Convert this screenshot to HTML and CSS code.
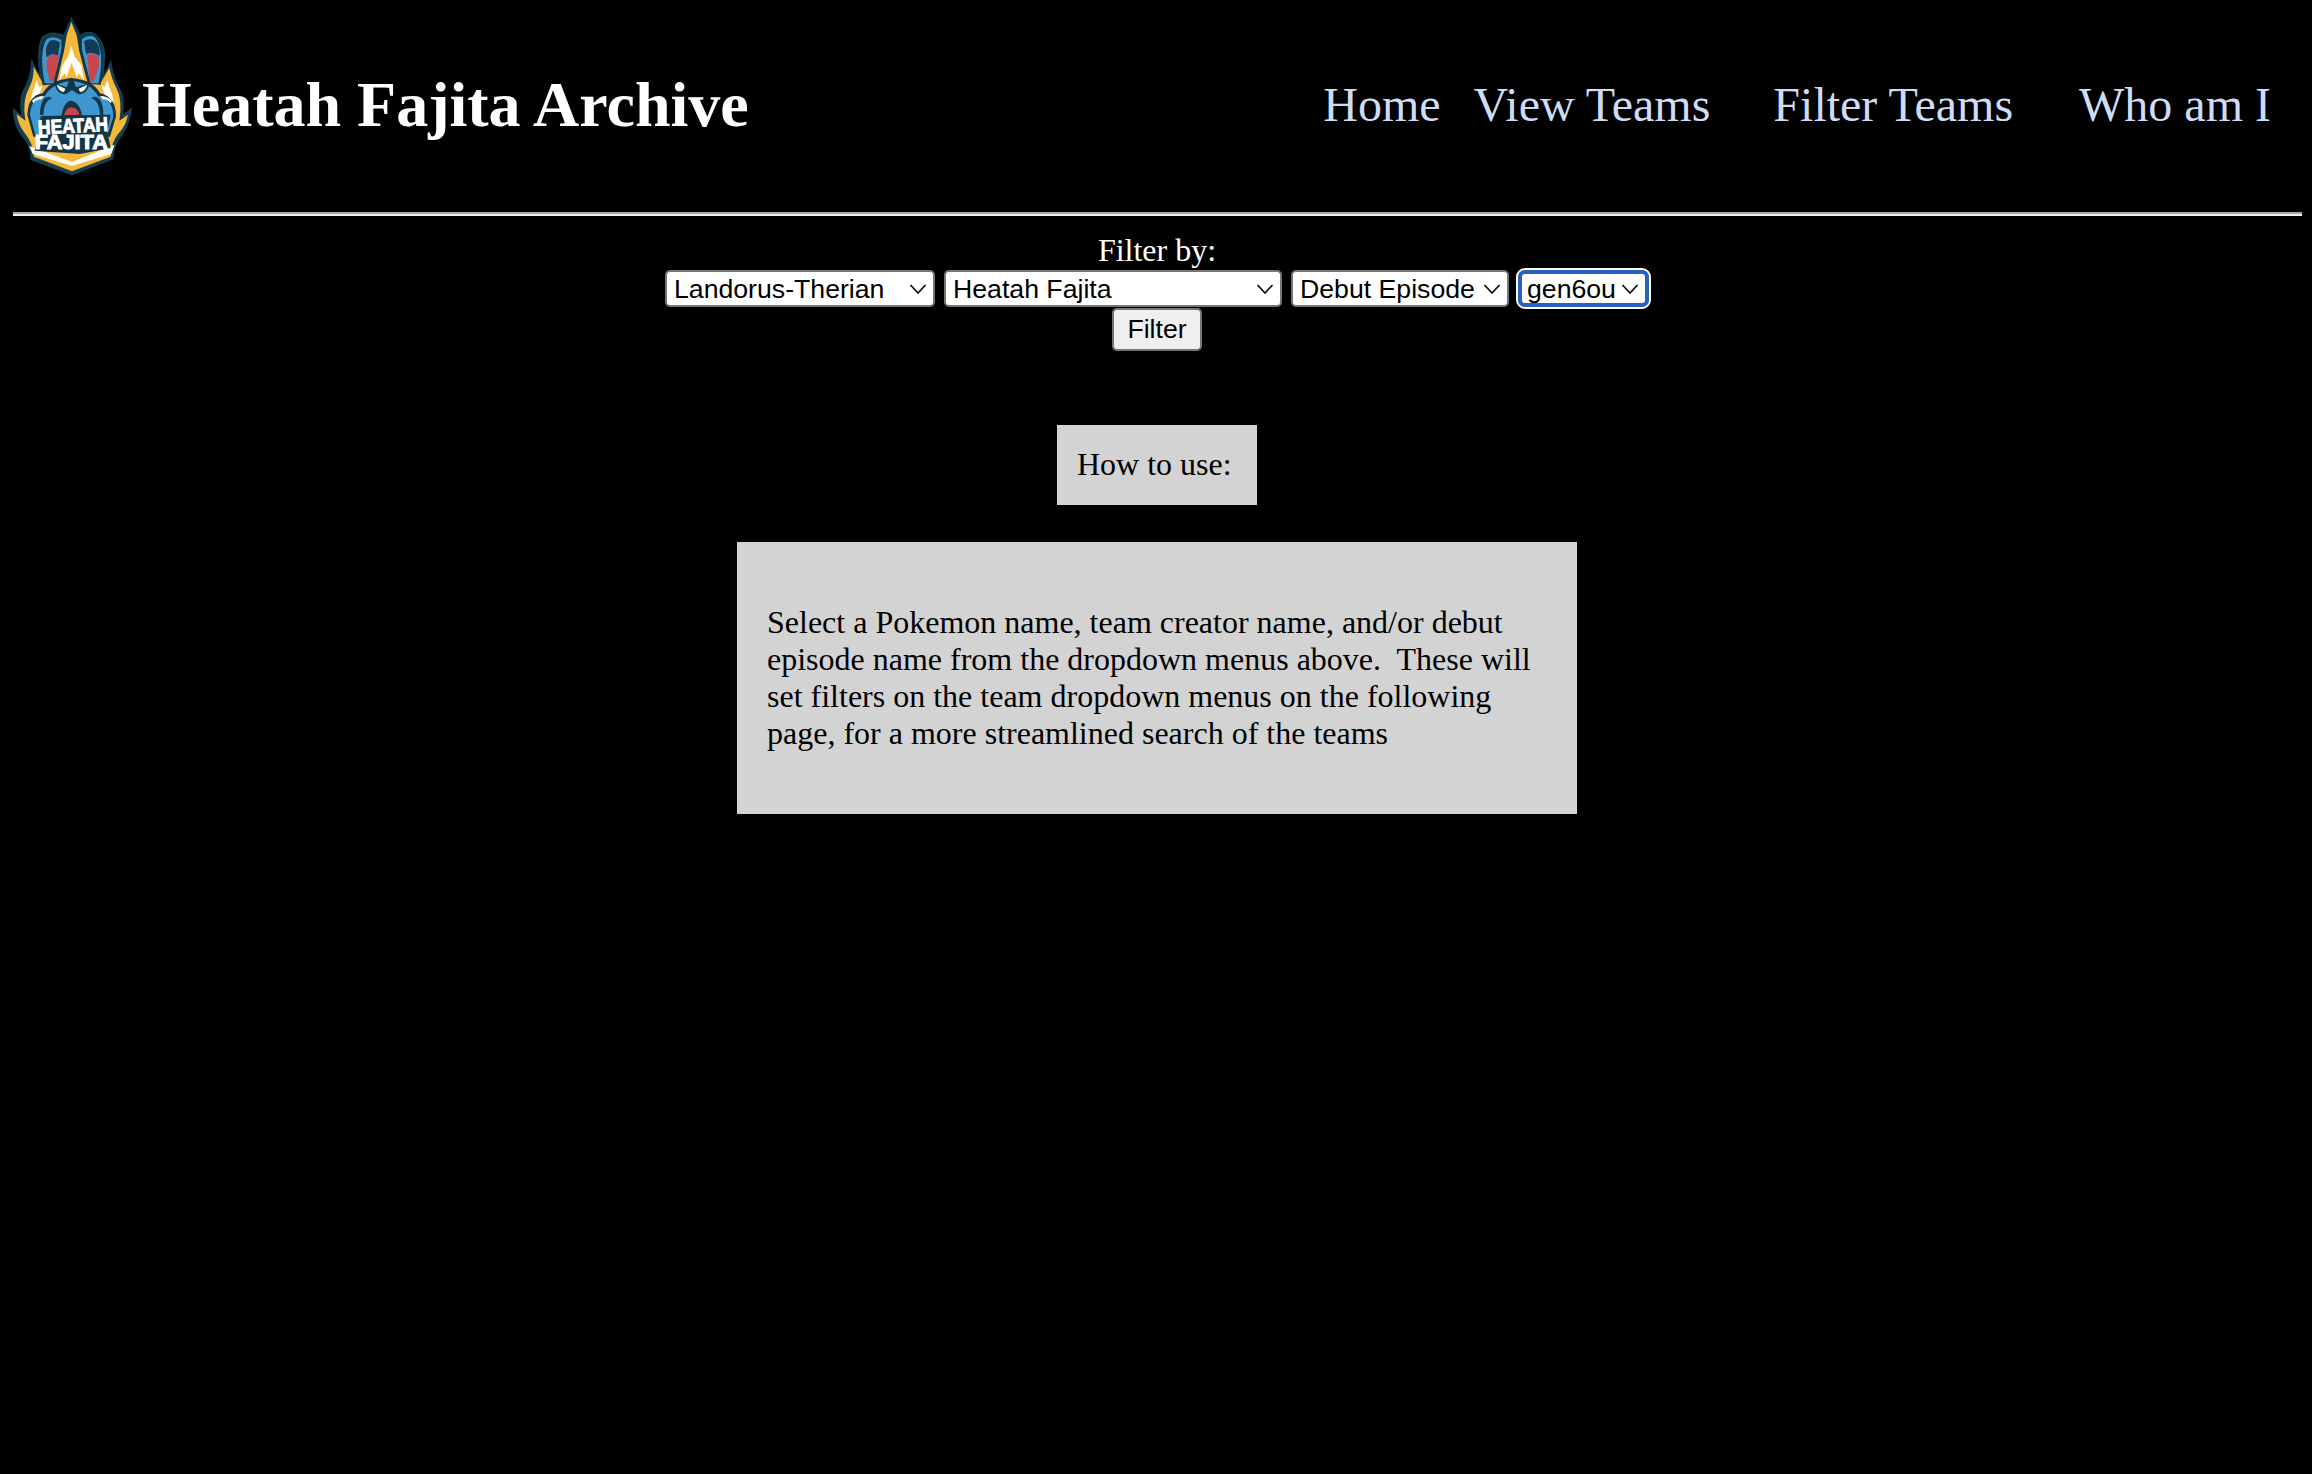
FILE: index.html
```html
<!DOCTYPE html>
<html lang="en">
<head>
<meta charset="utf-8">
<title>Heatah Fajita Archive</title>
<link rel="stylesheet" href="styles.css">
</head>
<body>
<header class="site-header">
  <div class="brand">
    <svg class="logo" viewBox="39 39 363 486" aria-label="Heatah Fajita logo">
      <path class="l-outline" d="M214 50 L236 92 L240 104 Q256 92 276 96 Q312 112 316 165 L312 222 L333 180 Q340 230 356 258 Q378 290 368 345 L396 322 Q392 370 366 408 Q344 428 340 478 L216 526 L92 480 Q90 430 62 405 Q38 370 38 322 L64 346 Q52 290 78 254 Q92 220 94 176 L118 222 Q108 150 124 112 Q150 88 190 104 Z"/>
      <path class="l-yellow" d="M101 200 Q102 235 88 262 Q66 300 76 362 L50 342 Q54 372 72 396 Q100 430 102 470 L216 514 L332 470 Q334 425 356 400 Q378 376 384 344 L358 362 Q368 300 350 266 Q336 240 328 204 L300 252 L130 252 Z"/>
      <path class="l-white" d="M110 240 L118 262 L128 256 L112 300 L94 340 Q86 300 102 266 Z M322 240 L314 262 L304 256 L320 300 L338 340 Q346 300 330 266 Z"/>
      <path class="l-white" d="M88 438 L216 486 L344 434 L334 462 L216 498 L98 462 Z"/>

      <path class="l-dark" d="M128 256 Q108 150 134 112 Q160 94 190 114 L198 250 Z"/>
      <path class="l-blue" d="M134 250 Q116 155 140 118 Q160 104 184 120 L186 250 Z"/>
      <path class="l-navy" d="M140 172 Q132 140 150 122 Q168 116 180 128 L174 168 Q156 156 140 172 Z"/>
      <path class="l-red" d="M150 242 Q132 190 144 172 Q158 158 176 168 L172 242 Z"/>

      <path class="l-dark" d="M232 250 L238 114 Q260 92 288 104 Q322 140 302 254 Z"/>
      <path class="l-blue" d="M244 250 L246 118 Q264 102 284 112 Q316 150 296 250 Z"/>
      <path class="l-navy" d="M298 168 Q304 136 282 120 Q264 114 252 124 L258 162 Q280 154 298 168 Z"/>
      <path class="l-red" d="M280 246 Q302 196 296 172 Q282 158 262 164 L268 246 Z"/>

      <path class="l-dark" d="M214 50 L238 104 L246 150 L272 252 L160 252 L184 150 L192 104 Z"/>
      <path class="l-yellow" d="M214 66 L230 106 L238 154 L262 246 L170 246 L192 154 L200 106 Z"/>
      <path class="l-white" d="M214 138 L224 170 L244 196 L252 240 L236 220 L230 232 L215 188 L200 232 L194 220 L178 240 L186 198 L204 170 Z"/>

      <path class="l-dark" d="M82 345 Q84 286 128 280 Q150 240 214 234 Q280 240 300 280 Q348 290 348 350 L330 410 L100 410 Z"/>
      <path class="l-blue" d="M90 345 Q92 296 134 288 Q158 248 214 242 Q272 248 294 288 Q340 298 340 350 L322 405 L106 405 Z"/>
      <path class="l-dark" d="M150 290 Q120 288 120 345 L130 345 Q132 300 156 296 Z M280 290 Q310 288 310 345 L300 345 Q298 300 274 296 Z"/>
      <path class="l-white" d="M96 302 Q110 288 132 288 L124 298 Q110 298 100 310 Z M336 302 Q322 288 300 288 L308 298 Q322 298 332 310 Z"/>

      <path class="l-dark" d="M164 250 L200 262 L206 244 L214 238 L222 244 L228 262 L268 250 Q262 286 234 282 L216 270 L198 282 Q170 286 164 250 Z"/>
      <path class="l-white" d="M170 254 L196 266 L192 276 Q176 274 170 254 Z M262 254 L236 266 L240 276 Q256 274 262 254 Z"/>

      <path class="l-dark" d="M184 350 Q190 306 212 302 Q240 306 246 348 Z"/>
      <path class="l-red" d="M192 346 Q198 324 214 322 Q234 324 238 344 Z"/>

      <path class="l-dark" d="M122 348 L332 344 L322 396 L332 444 L240 462 L104 452 L118 400 Z"/>
      <text class="l-text" x="114" y="398" textLength="210" lengthAdjust="spacingAndGlyphs" transform="rotate(-3 220 380)">HEATAH</text>
      <text class="l-text" x="104" y="446" textLength="220" lengthAdjust="spacingAndGlyphs">FAJITA</text>
    </svg>
    <h1 class="title">Heatah Fajita Archive</h1>
  </div>
  <nav class="nav">
    <a class="nav-link" href="#">Home</a>
    <a class="nav-link nav-view" href="#">View Teams</a>
    <a class="nav-link nav-filter" href="#">Filter Teams</a>
    <a class="nav-link" href="#">Who am I</a>
  </nav>
</header>
<hr class="rule">
<main class="content">
  <form class="filter">
    <div class="filter-label">Filter by:</div>
    <div class="filter-row">
      <select class="pick pick-pokemon"><option>Landorus-Therian</option></select>
      <select class="pick pick-creator"><option>Heatah Fajita</option></select>
      <select class="pick pick-episode"><option>Debut Episode</option></select>
      <select class="pick pick-tier"><option>gen6ou</option></select>
    </div>
    <button class="filter-btn" type="button">Filter</button>
  </form>
  <div class="howto-title">How to use:</div>
  <div class="howto-body">
    <p class="howto-text">Select a Pokemon name, team creator name, and/or debut episode name from the dropdown menus above.&nbsp; These will set filters on the team dropdown menus on the following page, for a more streamlined search of the teams</p>
  </div>
</main>
</body>
</html>
```

FILE: styles.css
```css
html, body {
  background: #000;
}

body {
  margin: 0;
  padding: 13px 10px 0 13px;
  color: #fff;
  font-family: "Liberation Serif", "Times New Roman", serif;
  font-size: 32px;
  line-height: 37px;
  height: 1474px;
  box-sizing: border-box;
  overflow: hidden;
}

.site-header {
  display: flex;
  align-items: center;
  justify-content: space-between;
  height: 184px;
}

.brand {
  display: flex;
  align-items: center;
  align-self: stretch;
  gap: 8px;
}

.logo {
  width: 121px;
  height: 162px;
  display: block;
  align-self: flex-start;
}

.l-outline { fill: #14404f; }
.l-white { fill: #fdfdf5; }
.l-yellow { fill: #f5b83a; }
.l-dark { fill: #123645; }
.l-blue { fill: #3f97cf; }
.l-navy { fill: #153a55; }
.l-red { fill: #c9464f; }
.l-text {
  fill: #fff;
  stroke: #fff;
  stroke-width: 3px;
  font-family: "Liberation Sans", Arial, sans-serif;
  font-size: 60px;
  font-weight: 700;
}

.title {
  margin: 0;
  font-size: 64px;
  line-height: 74px;
  font-weight: 700;
  color: #fff;
}

.nav {
  display: flex;
  gap: 33px;
  padding-right: 31px;
  margin-bottom: 2px;
}

.nav-link {
  font-size: 48px;
  line-height: 53px;
  color: #cfdcf6;
  text-decoration: none;
}

.nav-view {
  margin-right: 30px;
}

.nav-filter {
  margin-right: 33px;
}

.rule {
  margin: 15px 0 16px;
  height: 4px;
  border: 0;
  background: linear-gradient(#a9a9a9 50%, #f0f0f0 50%);
}

.content {
  display: flex;
  flex-direction: column;
  align-items: center;
  margin-right: 1px;
}

.filter {
  display: flex;
  flex-direction: column;
  align-items: center;
}

.filter-label {
  height: 38px;
}

.filter-row {
  display: flex;
  gap: 9px;
  align-items: center;
  height: 37px;
}

.pick {
  appearance: none;
  -webkit-appearance: none;
  height: 37px;
  padding: 0 7px;
  border: 2px solid #767676;
  border-radius: 5px;
  background-color: #fff;
  background-image: url("data:image/svg+xml,%3Csvg xmlns='http://www.w3.org/2000/svg' width='18' height='12' viewBox='0 0 18 12'%3E%3Cpath d='M1.5 2 L9 10 L16.5 2' fill='none' stroke='%23111' stroke-width='1.8'/%3E%3C/svg%3E");
  background-repeat: no-repeat;
  background-position: right 6px center;
  color: #000;
  font-family: "Liberation Sans", Arial, sans-serif;
  font-size: 26.67px;
  box-sizing: border-box;
}

.pick-pokemon { width: 270px; }
.pick-creator { width: 338px; }
.pick-episode { width: 218px; }

.pick-tier {
  width: 131px;
  padding: 0 5px;
  border-color: #2a5fc4;
  border-width: 4px;
  outline: 2px solid #fff;
  outline-offset: 0;
  border-radius: 7px;
}

.filter-btn {
  display: block;
  width: 90px;
  height: 43px;
  margin-top: 1px;
  padding: 0;
  border: 2px solid #767676;
  border-radius: 5px;
  background: #efefef;
  color: #000;
  font-family: "Liberation Sans", Arial, sans-serif;
  font-size: 26.67px;
}

.howto-title {
  margin-top: 74px;
  width: 200px;
  height: 80px;
  padding: 21px 20px 0;
  box-sizing: border-box;
  background: #d3d3d3;
  color: #000;
}

.howto-body {
  margin-top: 37px;
  width: 840px;
  height: 272px;
  padding: 62px 30px;
  box-sizing: border-box;
  background: #d3d3d3;
  color: #000;
}

.howto-text {
  margin: 0;
}
```
